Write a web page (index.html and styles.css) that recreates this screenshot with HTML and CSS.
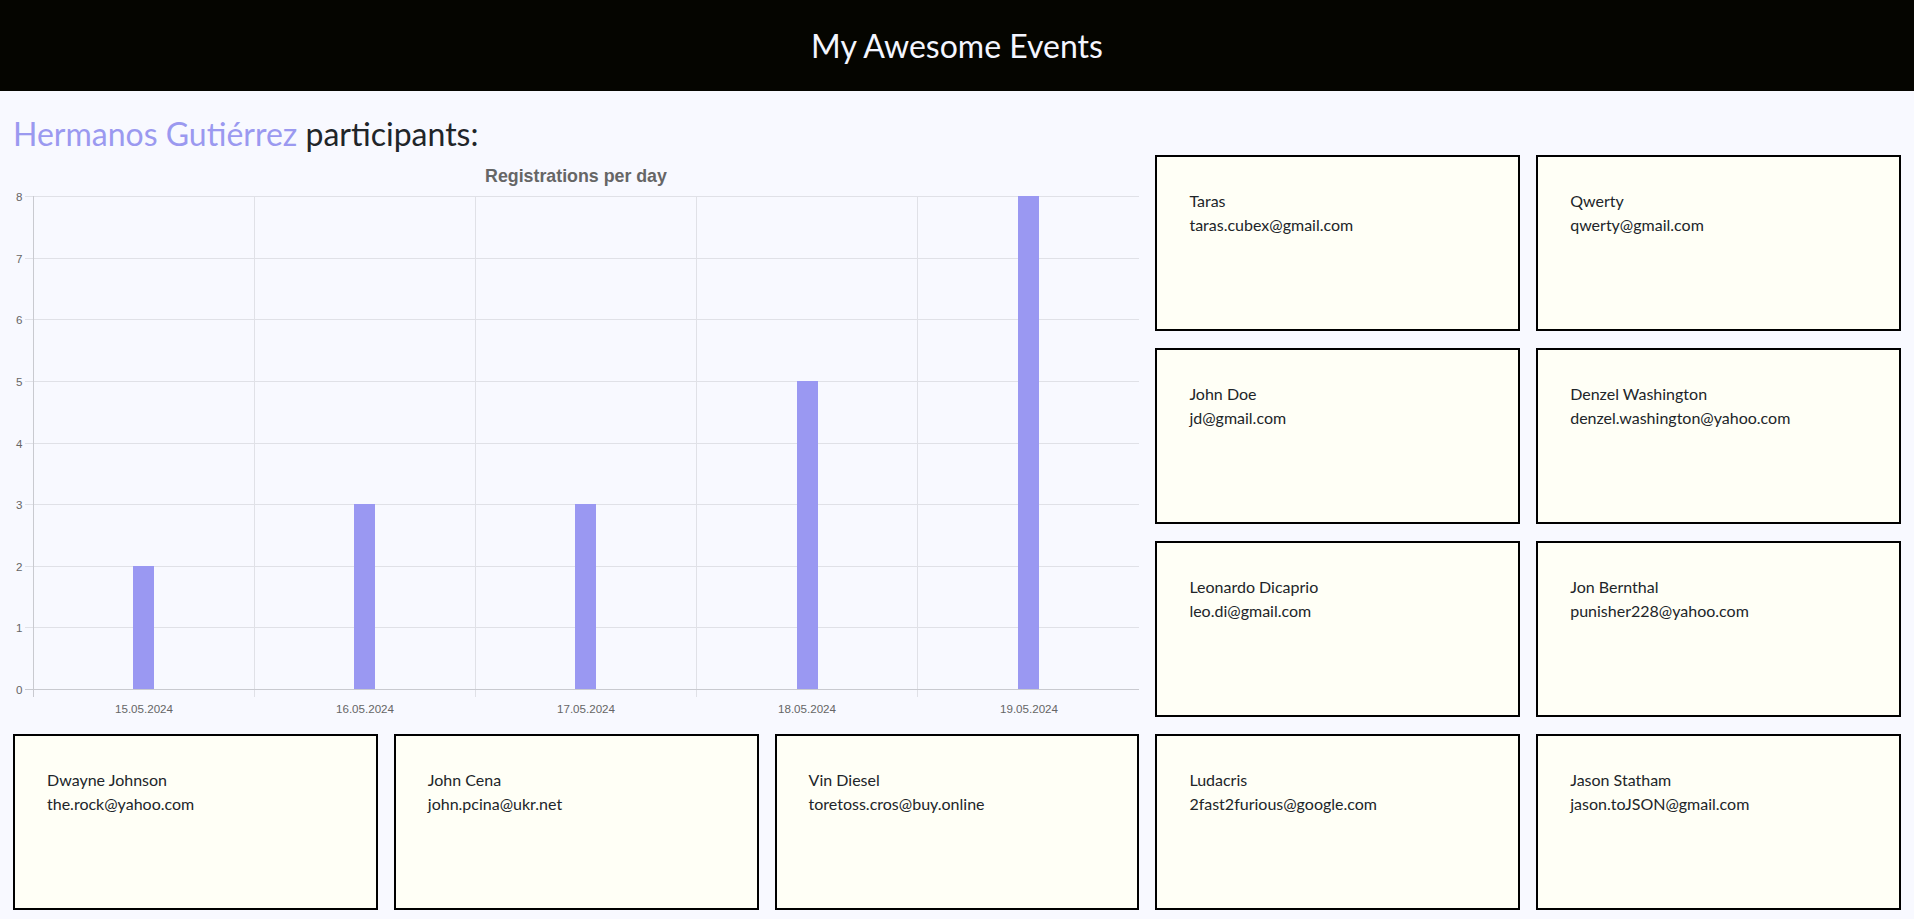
FILE: index.html
```html
<!DOCTYPE html>
<html lang="en">
<head>
<meta charset="utf-8">
<title>My Awesome Events</title>
<link rel="stylesheet" href="styles.css">
</head>
<body>
<header class="topbar">
  <h1 class="topbar-title">My Awesome Events</h1>
</header>
<main class="page">
  <h2 class="page-title"><span class="event-name">Hermanos Gutiérrez</span> participants:</h2>
  <section class="board">
    <div class="chart">
      <svg class="chart-svg" width="1126" height="562" viewBox="0 0 1126 562">
        <text class="chart-title" x="563" y="27">Registrations per day</text>
        <g class="grid">
          <line x1="12" y1="41.5" x2="1126" y2="41.5"/>
          <line x1="12" y1="103.5" x2="1126" y2="103.5"/>
          <line x1="12" y1="164.5" x2="1126" y2="164.5"/>
          <line x1="12" y1="226.5" x2="1126" y2="226.5"/>
          <line x1="12" y1="288.5" x2="1126" y2="288.5"/>
          <line x1="12" y1="349.5" x2="1126" y2="349.5"/>
          <line x1="12" y1="411.5" x2="1126" y2="411.5"/>
          <line x1="12" y1="472.5" x2="1126" y2="472.5"/>
          <line x1="241.5" y1="41" x2="241.5" y2="542"/>
          <line x1="462.5" y1="41" x2="462.5" y2="542"/>
          <line x1="683.5" y1="41" x2="683.5" y2="542"/>
          <line x1="904.5" y1="41" x2="904.5" y2="542"/>
        </g>
        <g class="axis">
          <line x1="20.5" y1="41" x2="20.5" y2="542"/>
          <line x1="12" y1="534.5" x2="1126" y2="534.5"/>
        </g>
        <g class="bars">
          <rect x="120" y="411" width="21" height="123"/>
          <rect x="341" y="349" width="21" height="185"/>
          <rect x="562" y="349" width="21" height="185"/>
          <rect x="784" y="226" width="21" height="308"/>
          <rect x="1005" y="41" width="21" height="493"/>
        </g>
        <g class="ylabels">
          <text x="9.5" y="45.5">8</text>
          <text x="9.5" y="107.5">7</text>
          <text x="9.5" y="168.5">6</text>
          <text x="9.5" y="230.5">5</text>
          <text x="9.5" y="292.5">4</text>
          <text x="9.5" y="353.5">3</text>
          <text x="9.5" y="415.5">2</text>
          <text x="9.5" y="476.5">1</text>
          <text x="9.5" y="538.5">0</text>
        </g>
        <g class="xlabels">
          <text x="131" y="557.5">15.05.2024</text>
          <text x="352" y="557.5">16.05.2024</text>
          <text x="573" y="557.5">17.05.2024</text>
          <text x="794" y="557.5">18.05.2024</text>
          <text x="1016" y="557.5">19.05.2024</text>
        </g>
      </svg>
    </div>
    <div class="card"><p>Taras</p><p>taras.cubex@gmail.com</p></div>
    <div class="card"><p>Qwerty</p><p>qwerty@gmail.com</p></div>
    <div class="card"><p>John Doe</p><p>jd@gmail.com</p></div>
    <div class="card"><p>Denzel Washington</p><p>denzel.washington@yahoo.com</p></div>
    <div class="card"><p>Leonardo Dicaprio</p><p>leo.di@gmail.com</p></div>
    <div class="card"><p>Jon Bernthal</p><p>punisher228@yahoo.com</p></div>
    <div class="card"><p>Dwayne Johnson</p><p>the.rock@yahoo.com</p></div>
    <div class="card"><p>John Cena</p><p>john.pcina@ukr.net</p></div>
    <div class="card"><p>Vin Diesel</p><p>toretoss.cros@buy.online</p></div>
    <div class="card"><p>Ludacris</p><p>2fast2furious@google.com</p></div>
    <div class="card"><p>Jason Statham</p><p>jason.toJSON@gmail.com</p></div>
  </section>
</main>
</body>
</html>
```

FILE: styles.css
```css
* { box-sizing: border-box; }

html, body {
  margin: 0;
  padding: 0;
}

body {
  background: #f8f9ff;
  color: #212529;
  font-family: Lato, "Noto Sans", sans-serif;
  font-size: 16px;
  line-height: 1.5;
}

.topbar {
  height: 91px;
  background: #050500;
  display: flex;
  align-items: center;
  justify-content: center;
}

.topbar-title {
  margin: 0;
  color: #f4f6ff;
  font-weight: 400;
  font-size: 32px;
  line-height: 1;
}

.page {
  padding: 0 13px 9px;
}

.page-title {
  margin: 0;
  padding-top: 24px;
  height: 64px;
  font-weight: 400;
  font-size: 32px;
  line-height: 38px;
  color: #212529;
}

.event-name {
  color: #9b99f0;
}

.board {
  display: grid;
  grid-template-columns: repeat(5, 1fr);
  grid-template-rows: repeat(4, 176px);
  column-gap: 16px;
  row-gap: 17px;
}

.chart {
  grid-column: 1 / 4;
  grid-row: 1 / 4;
}

.chart-svg {
  display: block;
}

.chart-title {
  font-family: "Liberation Sans", Arial, sans-serif;
  font-weight: 700;
  font-size: 17.8px;
  fill: #666;
  text-anchor: middle;
}

.grid line {
  stroke: #e0e1e7;
  stroke-width: 1;
}

.axis line {
  stroke: #c9cad0;
  stroke-width: 1;
}

.bars rect {
  fill: #9a98f2;
}

.ylabels text {
  font-family: "Liberation Sans", Arial, sans-serif;
  font-size: 11.6px;
  fill: #666;
  text-anchor: end;
}

.xlabels text {
  font-family: "Liberation Sans", Arial, sans-serif;
  font-size: 11.6px;
  fill: #666;
  text-anchor: middle;
}

.card {
  background: #fffff6;
  border: 2px solid #000;
  padding: 32px;
}

.card p {
  margin: 0;
  line-height: 24px;
}
```
